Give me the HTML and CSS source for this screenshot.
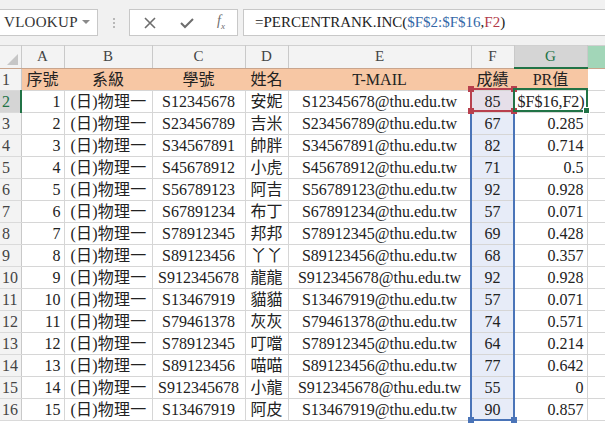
FILE: index.html
```html
<!DOCTYPE html>
<html lang="zh-Hant">
<head>
	<meta charset="UTF-8">
	<title>PERCENTRANK</title>
	<link rel="stylesheet" href="styles.css">
</head>
<body>
	<div class="bar">
		<div class="name-box">VLOOKUP<span class="drop"></span></div>
		<div class="grip"><i></i><i></i><i></i></div>
		<div class="buttons">
			<svg width="14" height="14" viewBox="0 0 14 14"><path d="M2 2L12 12M12 2L2 12" stroke="#6d6d6d" stroke-width="1.6" fill="none"/></svg>
			<svg width="16" height="14" viewBox="0 0 16 14"><path d="M2 7L6 11L14 3" stroke="#6d6d6d" stroke-width="2" fill="none"/></svg>
			<span class="fx">f<sub>x</sub></span>
		</div>
		<div class="formula">=PERCENTRANK.INC(<span class="ref-blue">$F$2:$F$16</span>,<span class="ref-red">F2</span>)</div>
	</div>

	<div class="sheet">
		<table class="grid">
			<col class="c-rh"><col class="c-a"><col class="c-b"><col class="c-c"><col class="c-d"><col class="c-e"><col class="c-f"><col class="c-g"><col class="c-h">
			<tr class="colhead">
				<th class="corner"><span class="tri"></span></th>
				<th>A</th><th>B</th><th>C</th><th>D</th><th>E</th><th>F</th><th class="sel">G</th><th class="next"></th>
			</tr>
			<tr class="title">
				<th class="rh">1</th>
				<td>序號</td><td>系級</td><td>學號</td><td>姓名</td><td>T-MAIL</td><td>成績</td><td>PR值</td><td class="blank"></td>
			</tr>
			<tr>
				<th class="rh sel">2</th>
				<td class="num">1</td><td class="dept">(日)物理一</td><td class="mid">S12345678</td><td class="mid">安妮</td><td class="mid">S12345678@thu.edu.tw</td><td class="score first">85</td><td class="editing">$F$16,F2)</td><td></td>
			</tr>
			<tr><th class="rh">3</th><td class="num">2</td><td class="dept">(日)物理一</td><td class="mid">S23456789</td><td class="mid">吉米</td><td class="mid">S23456789@thu.edu.tw</td><td class="score">67</td><td class="num">0.285</td><td></td></tr>
			<tr><th class="rh">4</th><td class="num">3</td><td class="dept">(日)物理一</td><td class="mid">S34567891</td><td class="mid">帥胖</td><td class="mid">S34567891@thu.edu.tw</td><td class="score">82</td><td class="num">0.714</td><td></td></tr>
			<tr><th class="rh">5</th><td class="num">4</td><td class="dept">(日)物理一</td><td class="mid">S45678912</td><td class="mid">小虎</td><td class="mid">S45678912@thu.edu.tw</td><td class="score">71</td><td class="num">0.5</td><td></td></tr>
			<tr><th class="rh">6</th><td class="num">5</td><td class="dept">(日)物理一</td><td class="mid">S56789123</td><td class="mid">阿吉</td><td class="mid">S56789123@thu.edu.tw</td><td class="score">92</td><td class="num">0.928</td><td></td></tr>
			<tr><th class="rh">7</th><td class="num">6</td><td class="dept">(日)物理一</td><td class="mid">S67891234</td><td class="mid">布丁</td><td class="mid">S67891234@thu.edu.tw</td><td class="score">57</td><td class="num">0.071</td><td></td></tr>
			<tr><th class="rh">8</th><td class="num">7</td><td class="dept">(日)物理一</td><td class="mid">S78912345</td><td class="mid">邦邦</td><td class="mid">S78912345@thu.edu.tw</td><td class="score">69</td><td class="num">0.428</td><td></td></tr>
			<tr><th class="rh">9</th><td class="num">8</td><td class="dept">(日)物理一</td><td class="mid">S89123456</td><td class="mid">丫丫</td><td class="mid">S89123456@thu.edu.tw</td><td class="score">68</td><td class="num">0.357</td><td></td></tr>
			<tr><th class="rh">10</th><td class="num">9</td><td class="dept">(日)物理一</td><td class="mid">S912345678</td><td class="mid">龍龍</td><td class="mid">S912345678@thu.edu.tw</td><td class="score">92</td><td class="num">0.928</td><td></td></tr>
			<tr><th class="rh">11</th><td class="num">10</td><td class="dept">(日)物理一</td><td class="mid">S13467919</td><td class="mid">貓貓</td><td class="mid">S13467919@thu.edu.tw</td><td class="score">57</td><td class="num">0.071</td><td></td></tr>
			<tr><th class="rh">12</th><td class="num">11</td><td class="dept">(日)物理一</td><td class="mid">S79461378</td><td class="mid">灰灰</td><td class="mid">S79461378@thu.edu.tw</td><td class="score">74</td><td class="num">0.571</td><td></td></tr>
			<tr><th class="rh">13</th><td class="num">12</td><td class="dept">(日)物理一</td><td class="mid">S78912345</td><td class="mid">叮噹</td><td class="mid">S78912345@thu.edu.tw</td><td class="score">64</td><td class="num">0.214</td><td></td></tr>
			<tr><th class="rh">14</th><td class="num">13</td><td class="dept">(日)物理一</td><td class="mid">S89123456</td><td class="mid">喵喵</td><td class="mid">S89123456@thu.edu.tw</td><td class="score">77</td><td class="num">0.642</td><td></td></tr>
			<tr><th class="rh">15</th><td class="num">14</td><td class="dept">(日)物理一</td><td class="mid">S912345678</td><td class="mid">小龍</td><td class="mid">S912345678@thu.edu.tw</td><td class="score">55</td><td class="num">0</td><td></td></tr>
			<tr><th class="rh">16</th><td class="num">15</td><td class="dept">(日)物理一</td><td class="mid">S13467919</td><td class="mid">阿皮</td><td class="mid">S13467919@thu.edu.tw</td><td class="score">90</td><td class="num">0.857</td><td></td></tr>
		</table>

		<!-- range highlight F2:F16 and the active cell -->
		<div class="range"><span class="h bl"></span><span class="h br"></span></div>
		<div class="ref-box"><span class="h tl"></span><span class="h tr"></span><span class="h bl"></span><span class="h br"></span></div>
		<div class="active"><span class="fill"></span></div>
	</div>
</body>
</html>
```

FILE: styles.css
```css
body {
	margin: 0;
	width: 605px;
	height: 424px;
	overflow: hidden;
	background: #fff;
	font-family: "Liberation Serif", "Noto Sans CJK TC", serif;
	color: #222;
}

.bar {
	display: flex;
	align-items: flex-start;
	height: 45px;
	padding-top: 9px;
	box-sizing: border-box;
	background: #f1f1f1;
}

.name-box {
	position: relative;
	width: 98px;
	height: 27px;
	box-sizing: border-box;
	background: #fff;
	border: 1px solid #c8c8c8;
	border-left: none;
	padding-left: 4px;
	font-size: 15px;
	line-height: 25px;
	color: #333;
	letter-spacing: 0.3px;
}

.drop {
	position: absolute;
	right: 7px;
	top: 10px;
	border-left: 4px solid transparent;
	border-right: 4px solid transparent;
	border-top: 4px solid #8a8a8a;
}

.grip {
	display: flex;
	flex-direction: column;
	gap: 2px;
	margin: 9px 14px 0 15px;
}

.grip i {
	width: 2px;
	height: 2px;
	background: #b8b8b8;
}

.buttons {
	display: flex;
	align-items: center;
	justify-content: space-between;
	width: 109px;
	height: 27px;
	box-sizing: border-box;
	padding: 0 12px 0 13px;
	background: #fff;
	border: 1px solid #c8c8c8;
}

.fx {
	font-style: italic;
	font-size: 14px;
	color: #6d6d6d;
	line-height: 1;
}

.fx sub {
	font-size: 9px;
}

.formula {
	flex: 1;
	height: 27px;
	margin-left: 5px;
	box-sizing: border-box;
	background: #fff;
	border: 1px solid #c8c8c8;
	border-right: none;
	padding-left: 11px;
	font-size: 15px;
	line-height: 25px;
	color: #222;
}

.ref-blue {
	color: #3568a8;
}

.ref-red {
	color: #b23a48;
}

.sheet {
	position: relative;
}

.grid {
	table-layout: fixed;
	border-collapse: collapse;
	width: 605px;
	font-size: 16px;
}

.c-rh { width: 21px; }
.c-a { width: 43px; }
.c-b { width: 88px; }
.c-c { width: 93px; }
.c-d { width: 43px; }
.c-e { width: 183px; }
.c-f { width: 43px; }
.c-g { width: 73px; }
.c-h { width: 18px; }

.grid tr {
	height: 22px;
}

.grid th,
.grid td {
	padding: 0 3px;
	white-space: nowrap;
	overflow: hidden;
	border-right: 1px solid #d6d6d6;
	border-bottom: 1px solid #d6d6d6;
	line-height: 21px;
}

.colhead th {
	background: #f3f3f3;
	font-weight: normal;
	font-size: 15px;
	color: #444;
	border-top: 1px solid #d0d0d0;
	border-right: 1px solid #c9c9c9;
	border-bottom: 1px solid #c9a58d;
}

.colhead th.sel {
	background: #d5d5d5;
	color: #217346;
	border-bottom: 2px solid #217346;
}

.colhead th.next {
	background: #a2d6b8;
	border-right: none;
}

.corner {
	position: relative;
}

.tri {
	position: absolute;
	right: 3px;
	bottom: 3px;
	border-left: 11px solid transparent;
	border-bottom: 11px solid #c6c6c6;
}

.rh {
	background: #f3f3f3;
	font-weight: normal;
	text-align: left;
	color: #444;
	font-size: 16px;
	padding-left: 2px !important;
	border-right: 1px solid #c9c9c9 !important;
	border-bottom: 1px solid #dadada !important;
}

.rh.sel {
	background: #d5d5d5;
	color: #217346;
	border-right: 2px solid #217346 !important;
}

.title td {
	background: #f7c7a4;
	border-right-color: #f7c7a4;
	text-align: center;
}

.title td.blank {
	background: #fff;
	border-right-color: #d6d6d6;
}

.num {
	text-align: right;
}

.dept {
	text-align: left;
	padding-left: 6px !important;
	letter-spacing: 0.2px;
}

.mid {
	text-align: center;
}

.score {
	text-align: center;
	background: #e7ecf8;
}

.score.first {
	background: #e6dfe9;
}

.editing {
	text-align: left;
	text-overflow: clip;
	padding-left: 2px;
}

.range,
.ref-box,
.active {
	position: absolute;
	box-sizing: border-box;
}

.range {
	left: 470px;
	top: 43px;
	width: 45px;
	height: 333px;
	border: 2px solid #4a74b8;
}

.ref-box {
	left: 470px;
	top: 43px;
	width: 45px;
	height: 24px;
	border: 2px solid #b8404e;
}

.active {
	left: 513px;
	top: 43px;
	width: 75px;
	height: 24px;
	border: 2px solid #217346;
}

.h {
	position: absolute;
	width: 6px;
	height: 6px;
}

.range .h {
	background: #4a74b8;
}

.ref-box .h {
	background: #b8404e;
}

.tl { left: -4px; top: -4px; }
.tr { right: -4px; top: -4px; }
.bl { left: -4px; bottom: -4px; }
.br { right: -4px; bottom: -4px; }

.fill {
	position: absolute;
	right: -4px;
	bottom: -4px;
	width: 5px;
	height: 5px;
	background: #217346;
	border: 1px solid #fff;
}
```
